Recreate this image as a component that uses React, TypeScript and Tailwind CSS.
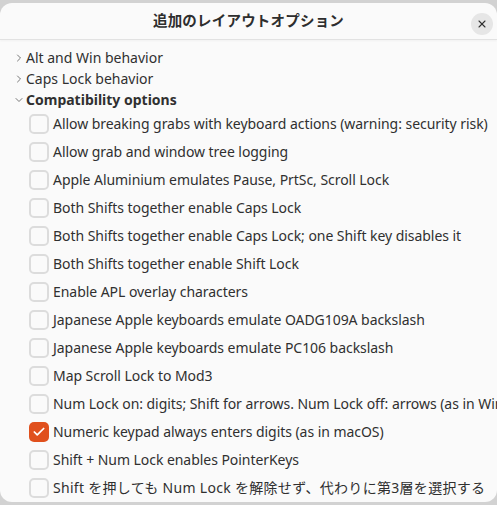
import { ChevronRight, ChevronDown, X, Check } from "lucide-react";

const groups = ["Alt and Win behavior", "Caps Lock behavior"];

const options = [
  { label: "Allow breaking grabs with keyboard actions (warning: security risk)", checked: false },
  { label: "Allow grab and window tree logging", checked: false },
  { label: "Apple Aluminium emulates Pause, PrtSc, Scroll Lock", checked: false },
  { label: "Both Shifts together enable Caps Lock", checked: false },
  { label: "Both Shifts together enable Caps Lock; one Shift key disables it", checked: false },
  { label: "Both Shifts together enable Shift Lock", checked: false },
  { label: "Enable APL overlay characters", checked: false },
  { label: "Japanese Apple keyboards emulate OADG109A backslash", checked: false },
  { label: "Japanese Apple keyboards emulate PC106 backslash", checked: false },
  { label: "Map Scroll Lock to Mod3", checked: false },
  { label: "Num Lock on: digits; Shift for arrows. Num Lock off: arrows (as in Windows)", checked: false },
  { label: "Numeric keypad always enters digits (as in macOS)", checked: true },
  { label: "Shift + Num Lock enables PointerKeys", checked: false },
  { label: "Shift を押しても Num Lock を解除せず、代わりに第3層を選択する", checked: false, cjk: true },
];

export default function App() {
  return (
    <div
      className="w-[497px] h-[505px] bg-[#d2d2d2] pt-[3px] overflow-hidden"
      style={{ fontFamily: '"Noto Sans", "Noto Sans CJK JP", sans-serif' }}
    >
      <div className="h-[499px] bg-[#fafafa] rounded-[12px] overflow-hidden flex flex-col text-[#303030]">
        {/* Header */}
        <div className="h-[37px] shrink-0 relative flex items-center justify-center border-b border-[#e2e2e2] shadow-[0_1px_2px_rgba(0,0,0,0.04)]">
          <span className="text-[14.5px] font-bold text-[#2e2e2e] tracking-[0.2px]">追加のレイアウトオプション</span>
          <button className="absolute right-[4px] top-[10px] w-[22px] h-[22px] rounded-full bg-[#e6e6e6] flex items-center justify-center">
            <X className="w-[12px] h-[12px] text-[#333]" strokeWidth={2.2} />
          </button>
        </div>

        {/* List */}
        <div className="flex-1 pt-[7px] text-[14px] leading-none whitespace-nowrap overflow-hidden">
          {groups.map((g) => (
            <div key={g} className="h-[21px] flex items-center pl-[13px]">
              <ChevronRight className="w-[12px] h-[12px] text-[#555]" strokeWidth={1.6} />
              <span className="ml-[1px]">{g}</span>
            </div>
          ))}
          <div className="h-[21px] flex items-center pl-[13px]">
            <ChevronDown className="w-[12px] h-[12px] text-[#555]" strokeWidth={1.6} />
            <span className="ml-[1px] font-bold">Compatibility options</span>
          </div>
          {options.map((o) => (
            <div key={o.label} className="h-[28px] flex items-center pl-[29px]">
              {o.checked ? (
                <span className="w-[20px] h-[20px] shrink-0 rounded-[5px] bg-[#e0501d] flex items-center justify-center">
                  <Check className="w-[14px] h-[14px] text-white" strokeWidth={3} />
                </span>
              ) : (
                <span className="w-[20px] h-[20px] shrink-0 rounded-[5px] border-2 border-[#dcdcdc] bg-[#fafafa]" />
              )}
              <span className={o.cjk ? "ml-[4px] tracking-[0.3px]" : "ml-[4px] tracking-[-0.05px]"}>{o.label}</span>
            </div>
          ))}
        </div>
      </div>
    </div>
  );
}
